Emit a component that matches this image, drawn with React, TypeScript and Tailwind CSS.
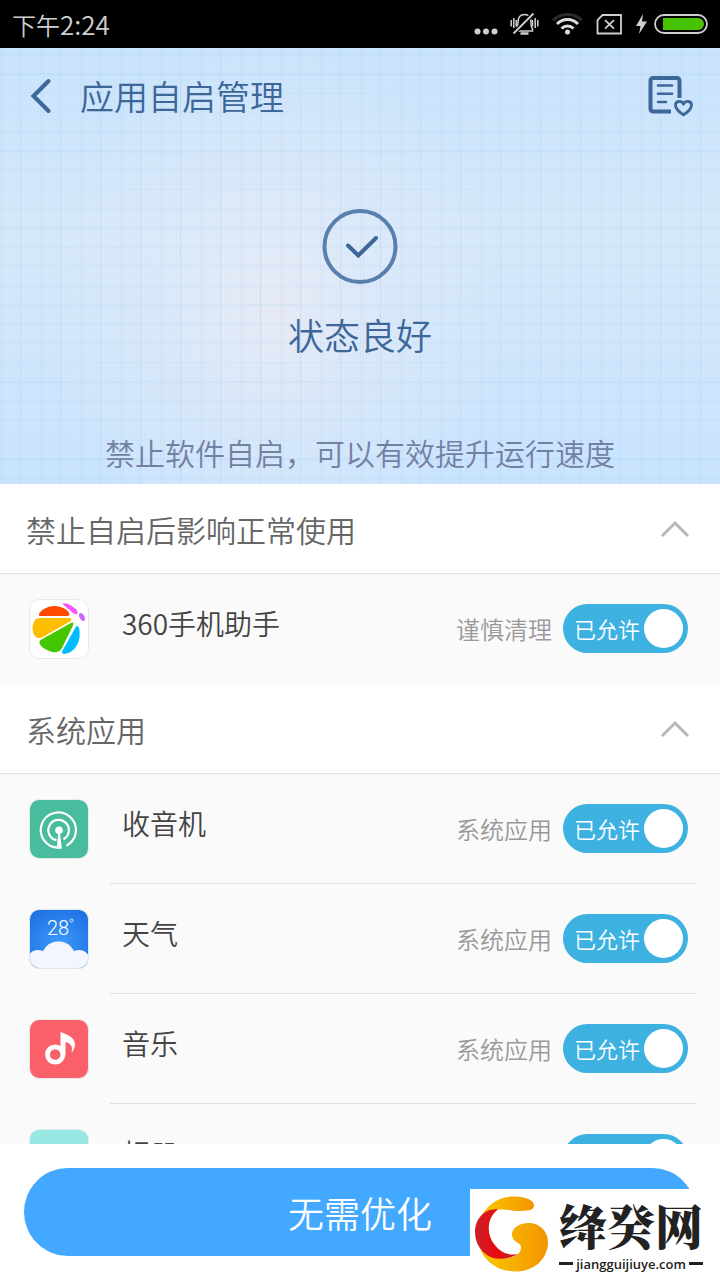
import { type ReactNode, useState } from 'react';

function StatusBar() {
  return (
    <div className="flex h-12 shrink-0 items-center justify-between bg-black pl-3 pr-[10px] text-[#cfcfcf]">
      <span className="text-2xl">
        下午<span className="text-[26px]">2:24</span>
      </span>
      <div className="flex items-center" aria-hidden="true">
        <svg className="h-12 w-[26px]" viewBox="474 0 26 48" fill="#cfcfcf">
          <circle cx="477.500" cy="31.500" r="3" />
          <circle cx="486" cy="31.500" r="3" />
          <circle cx="494.500" cy="31.500" r="3" />
        </svg>
        <svg className="h-12 w-[210px]" viewBox="500 0 210 48" fill="none">
          <g stroke="#cfcfcf" strokeWidth="1.500">
            <path d="M515.500 31h17v-2.500c-1.500-1-1.500-3-1.500-6 0-5-2.500-8-6.500-8s-6.500 3-6.500 8c0 3 0 5-2.500 8.500" />
            <path d="M511.200 20v6.500M513.800 18v10M516.200 20v6.500M532.500 20v6.500M535.200 18v10M537.800 20v6.500" />
            <path d="M520.500 33.500h8" strokeWidth="2.500" />
          </g>
          <path d="M513.500 33.500L533.500 13.500" stroke="#000" strokeWidth="4.500" />
          <path d="M513.500 33.500L533.500 13.500" stroke="#cfcfcf" strokeWidth="1.800" />
          <path d="M553 20.500c8-8 21-8 29 0" stroke="#2b2b2b" strokeWidth="3" />
          <path d="M557 24c6-6 15-6 21 0M561.500 28.500c3.500-3.500 8.500-3.500 12 0" stroke="#dcdcdc" strokeWidth="3" />
          <circle cx="567.500" cy="32" r="2.500" fill="#dcdcdc" />
          <path d="M602.500 15h18.500v18.500h-23.500v-13.500z" stroke="#cfcfcf" strokeWidth="1.800" />
          <path d="M605 20.200l9 8.500M614 20.200l-9 8.500" stroke="#cfcfcf" strokeWidth="1.800" />
          <path d="M643 14l-7 12h4.500l-1.500 8 8-12.500h-5z" fill="#cfcfcf" />
          <rect x="655" y="15" width="52" height="18" rx="9" stroke="#cfcfcf" strokeWidth="1.800" />
          <path d="M663 18h35a6 6 0 0 1 0 12h-35z" fill="#48c300" />
        </svg>
      </div>
    </div>
  );
}

// woven paper: a fine mesh with a stronger thread every second column and fourth row
function HeroTexture() {
  return (
    <svg className="absolute inset-0 h-full w-full" aria-hidden="true">
      <defs>
        <pattern id="mesh" width="40" height="77" y="25.500" patternUnits="userSpaceOnUse">
          <g stroke="#8fc0e6">
            <path d="M0.500 0v77M3.500 0v77" strokeOpacity=".1" />
            <path d="M20.500 0v77" strokeOpacity=".26" />
            <path d="M0 0.500h40" strokeOpacity=".26" />
            <path d="M0 2.500h40" strokeOpacity=".08" />
            <path d="M0 19.500h40M0 38.500h40M0 58.500h40" strokeOpacity=".16" />
          </g>
        </pattern>
      </defs>
      <rect width="100%" height="100%" fill="url(#mesh)" />
    </svg>
  );
}

function Hero() {
  return (
    <header className="relative shrink-0 bg-[radial-gradient(ellipse_230px_270px_at_38%_60%,#e6eaf5_0%,#e2eaf780_45%,#d6e9fa00_100%),linear-gradient(180deg,#c9e4fb_0%,#cfe5fc_22%,#d6e9fa_42%,#cfe5fc_75%,#c9e4fe_100%)]">
      <HeroTexture />
      <div className="relative flex flex-col">
        <div className="flex h-24 items-center justify-between pl-7 pr-6">
          <div className="flex items-center gap-7">
            <button type="button" aria-label="返回">
              <svg className="h-9 w-6" viewBox="0 0 24 36" fill="none" stroke="#3d6699" strokeWidth="4" strokeLinecap="round">
                <path d="M20.500 3L5.500 18l15 15" />
              </svg>
            </button>
            <h1 className="text-[34px] leading-10 text-[#3d6699]">应用自启管理</h1>
          </div>
          <button type="button" aria-label="白名单">
            <svg className="h-12 w-12" viewBox="0 0 48 48" fill="none" stroke="#3d6699" strokeWidth="4" strokeLinecap="round" strokeLinejoin="round">
              <path d="M31.500 26V9q0-3-3-3h-23q-3 0-3 3v27.500q0 3 3 3h17.500" strokeLinecap="butt" />
              <path d="M10 13.500h14M10 21.700h14M10 30h8" strokeWidth="2.600" />
              <path d="M35.500 43C31 39.500 27.500 37 27.500 33.200c0-4.500 6-5 8-1.200 2-3.800 8-3.300 8 1.200 0 3.800-3.500 6.300-8 9.800z" strokeWidth="2.800" />
            </svg>
          </button>
        </div>
        <div className="flex flex-col items-center pt-16 text-center">
          <svg className="h-20 w-20" viewBox="0 0 80 80" fill="none" aria-hidden="true">
            <circle cx="40" cy="38.500" r="35.500" stroke="#587fad" strokeWidth="4" />
            <path d="M28 37.500l10.300 10 17.700-17.500" stroke="#3d6699" strokeWidth="4" strokeLinecap="round" />
          </svg>
          <p className="pt-6 text-4xl leading-[44px] text-[#3d6699]">状态良好</p>
          <p className="pt-[76px] pb-3 text-[30px] leading-10 text-[#7480a3]">禁止软件自启，可以有效提升运行速度</p>
        </div>
      </div>
    </header>
  );
}

function StoreIcon() {
  return (
    <svg className="h-[60px] w-[60px]" viewBox="0 0 60 60" aria-hidden="true">
      <rect x=".5" y=".5" width="59" height="59" rx="10" fill="#fff" stroke="#e8e8e8" />
      <path d="M12 17C9 17.500 9 14 14 10.500c8-5 16-4.500 23 0 4 3 5 6.500 1 6.500z" fill="#ff4a00" />
      <path d="M7 20q2-1 6-1h27c3 0 3 2 1 3.500L13 38.500c-10 4-12-13-6-18.500z" fill="#ffbd00" />
      <path d="M41 24.500c3-2 4-.5 3 2L33 49c-2.500 5.500-10 5-16 1.500-6-3-8-7-5.500-9.500z" fill="#44c700" />
      <path d="M48.500 27c2 1 2.500 6 2 11-1 9-7 16-15 17-2.500 0-3-1.500-2-3.500L46.500 28.500q1-2 2-1.500z" fill="#00bcff" />
      <path d="M33.500 5c2-3 14 3.500 15 7.500 1 3-2 3.500-4.500 1.500z" fill="#f754ff" />
      <ellipse cx="53" cy="18" rx="2.500" ry="4.300" transform="rotate(-25 53 18)" fill="#cb68ff" />
    </svg>
  );
}

function RadioIcon() {
  return (
    <svg className="h-[60px] w-[60px]" viewBox="0 0 60 60" aria-hidden="true">
      <rect x=".5" y=".5" width="59" height="59" rx="10" fill="#48bc9d" stroke="#e8eeec" />
      <g fill="none" stroke="#fff" strokeWidth="2.200">
        <path d="M29.500 48.700A17.600 17.600 0 1 1 37.500 46.700" />
        <path d="M27.500 41.200A10.300 10.300 0 1 1 34.500 40.200" />
      </g>
      <circle cx="30" cy="31.200" r="3.800" fill="#fff" />
      <path d="M29.300 32h1.500l2 17.800h-5z" fill="#fff" />
    </svg>
  );
}

function WeatherIcon() {
  return (
    <svg className="h-[60px] w-[60px]" viewBox="0 0 60 60" aria-hidden="true">
      <defs>
        <radialGradient id="sky" cx=".5" cy=".6" r=".7">
          <stop offset="0" stopColor="#3d9cfa" />
          <stop offset="1" stopColor="#1e70e4" />
        </radialGradient>
        <clipPath id="tile">
          <rect x="1" y="1" width="58" height="58" rx="10" />
        </clipPath>
      </defs>
      <rect x=".5" y=".5" width="59" height="59" rx="10" fill="url(#sky)" stroke="#e3e8ef" />
      <g clipPath="url(#tile)" fill="#f3f7fd">
        <circle cx="29.500" cy="50" r="17.500" />
        <circle cx="9" cy="52" r="11" />
        <circle cx="50" cy="52" r="11" />
        <rect y="50" width="60" height="10" />
      </g>
      <text x="18" y="26" fill="#fff" fontSize="20" fontWeight="300" fontFamily="Roboto, sans-serif">28</text>
      <circle cx="42.500" cy="11.500" r="1.500" fill="none" stroke="#fff" strokeWidth=".8" />
    </svg>
  );
}

function MusicIcon() {
  return (
    <svg className="h-[60px] w-[60px]" viewBox="0 0 60 60" aria-hidden="true">
      <rect x=".5" y=".5" width="59" height="59" rx="10" fill="#f9606a" stroke="#f0e6e6" />
      <circle cx="26.200" cy="35.500" r="7.700" fill="none" stroke="#fff" strokeWidth="4.800" />
      <path d="M31.500 13c5 2 14 4.500 14.500 12 0 4-1.500 6.500-3.500 8.500 1-4 1.500-8.500-6-10.500v12.500h-5z" fill="#fff" />
    </svg>
  );
}

function AlbumIcon() {
  return (
    <svg className="h-[60px] w-[60px]" viewBox="0 0 60 60" aria-hidden="true">
      <rect x=".5" y=".5" width="59" height="59" rx="10" fill="#97e8e2" stroke="#e4ecec" />
    </svg>
  );
}

function AllowSwitch({ name }: { name: string }) {
  const [allowed, setAllowed] = useState(true);
  return (
    <label className="relative mb-0.5 flex h-[49px] w-[125px] cursor-pointer items-center justify-between rounded-full bg-[#3db2e1] pl-[11px] pr-[5px]">
      <input type="checkbox" role="switch" className="sr-only" aria-label={name} checked={allowed} onChange={() => setAllowed(!allowed)} />
      <span className="text-[22px] leading-8 text-white">{allowed ? '已允许' : '已禁止'}</span>
      <span className="h-[39px] w-[39px] rounded-full bg-white" />
    </label>
  );
}

type AppItem = { name: string; note: string; icon: ReactNode };

function AppRow({ name, note, icon }: AppItem) {
  return (
    <li className="group relative flex h-[110px] items-center pl-[29px] pr-8">
      {icon}
      <span className="flex-1 pb-3 pl-[33px] text-[28px] leading-10 text-[#444]">{name}</span>
      <span className="pr-[11px] text-2xl text-[#999]">{note}</span>
      <AllowSwitch name={name} />
      <span className="absolute bottom-0 left-[110px] right-6 h-px bg-[#e0e0e0] group-last:hidden" />
    </li>
  );
}

function AppSection({ title, items }: { title: string; items: AppItem[] }) {
  const [open, setOpen] = useState(true);
  return (
    <section>
      <h2 className="border-b border-[#e0e0e0] bg-white">
        <button type="button" aria-expanded={open} onClick={() => setOpen(!open)} className="flex h-[89px] w-full items-center justify-between pl-[26px] pr-[30px]">
          <span className="text-[30px] leading-10 text-[#666]">{title}</span>
          <svg className="h-[18px] w-[30px]" viewBox="0 0 30 18" fill="none" stroke="#b8b8b8" strokeWidth="3" aria-hidden="true">
            <path d="M2 16L15 3l13 13" />
          </svg>
        </button>
      </h2>
      {open && (
        <ul>
          {items.map((item) => (
            <AppRow key={item.name} {...item} />
          ))}
        </ul>
      )}
    </section>
  );
}

function SiteBadge() {
  return (
    <div className="absolute bottom-0 right-0 flex h-[91px] w-[250px] items-center bg-white pl-1">
      <svg className="h-[91px] w-[80px] shrink-0" viewBox="0 0 80 91" aria-hidden="true">
        <defs>
          <linearGradient id="gold">
            <stop offset="0" stopColor="#fbc800" />
            <stop offset="1" stopColor="#f29500" />
          </linearGradient>
          <linearGradient id="crimson">
            <stop offset="0" stopColor="#c9202c" />
            <stop offset=".5" stopColor="#ea0a10" />
            <stop offset="1" stopColor="#c9202c" />
          </linearGradient>
        </defs>
        <path d="M5 32C12 14 27 7 41 7.500c12 .5 19 4 19 9 0 5-7 5.500-15 5.500-8 0-13-2-21-1.500C17 21 10 25 5 32z" fill="url(#gold)" />
        <path d="M6 60c9 9 28 13 38 5 4-4 4-9 0-11-11-5-7-20 11-20 11 0 19 9 19 19 0 17-14 29.500-32 29.500-17 0-30-8.500-36-22.500z" fill="url(#gold)" />
        <path d="M24 20.500C13 28 12 45 20 55c6 8 14 12 24 10-6 4-17 6-25 4C8 65 1 55 1 43c0-12 9-24 23-22.500z" fill="url(#crimson)" />
      </svg>
      <div className="flex flex-col pl-[5px] text-[#222]">
        <span className="font-['Noto_Serif_CJK_SC','Noto_Sans_CJK_SC',serif] text-5xl leading-[58px] font-black">绛癸网</span>
        <span className="flex items-center justify-between font-semibold">
          <span className="h-[3px] w-[14px] bg-[#222]" />
          <span className="font-['Open_Sans',sans-serif] text-[13px] leading-5">jiangguijiuye.com</span>
          <span className="h-[3px] w-[14px] bg-[#222]" />
        </span>
      </div>
    </div>
  );
}

const affectedApps: AppItem[] = [{ name: '360手机助手', note: '谨慎清理', icon: <StoreIcon /> }];

const systemApps: AppItem[] = [
  { name: '收音机', note: '系统应用', icon: <RadioIcon /> },
  { name: '天气', note: '系统应用', icon: <WeatherIcon /> },
  { name: '音乐', note: '系统应用', icon: <MusicIcon /> },
  { name: '相册', note: '系统应用', icon: <AlbumIcon /> },
];

export default function App() {
  return (
    <div className="flex h-dvh flex-col bg-[#fafafa] font-['Noto_Sans_CJK_SC',sans-serif] font-[350]">
      <StatusBar />
      <Hero />
      <main className="min-h-0 flex-1 overflow-y-auto [scrollbar-width:none]">
        <AppSection title="禁止自启后影响正常使用" items={affectedApps} />
        <AppSection title="系统应用" items={systemApps} />
      </main>
      <footer className="relative shrink-0 bg-white p-6">
        <button type="button" className="h-[88px] w-full rounded-full bg-[#43a8ff] text-4xl text-white">
          无需优化
        </button>
        <SiteBadge />
      </footer>
    </div>
  );
}
